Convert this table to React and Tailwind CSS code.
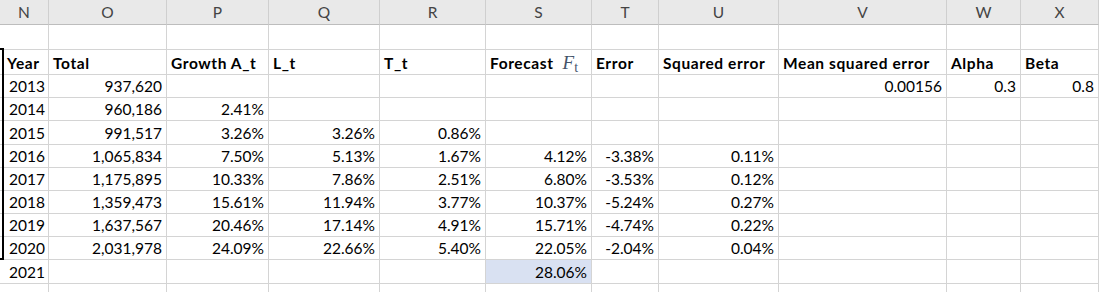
import React from "react";

const cols = [
  { id: "N", w: "w-[49px]" },
  { id: "O", w: "w-[118px]" },
  { id: "P", w: "w-[102px]" },
  { id: "Q", w: "w-[111px]" },
  { id: "R", w: "w-[106px]" },
  { id: "S", w: "w-[106px]" },
  { id: "T", w: "w-[67px]" },
  { id: "U", w: "w-[120px]" },
  { id: "V", w: "w-[168px]" },
  { id: "W", w: "w-[74px]" },
  { id: "X", w: "w-[78px]" },
];

const headers = [
  "Year",
  "Total",
  "Growth A_t",
  "L_t",
  "T_t",
  "forecast",
  "Error",
  "Squared error",
  "Mean squared error",
  "Alpha",
  "Beta",
];

// year, total, growth, L, T, forecast, error, sq error, mse, alpha, beta
const rows = [
  { h: "h-[23px]", v: ["2013", "937,620", "", "", "", "", "", "", "0.00156", "0.3", "0.8"] },
  { h: "h-[23px]", v: ["2014", "960,186", "2.41%", "", "", "", "", "", "", "", ""] },
  { h: "h-[24px]", v: ["2015", "991,517", "3.26%", "3.26%", "0.86%", "", "", "", "", "", ""] },
  { h: "h-[23px]", v: ["2016", "1,065,834", "7.50%", "5.13%", "1.67%", "4.12%", "-3.38%", "0.11%", "", "", ""] },
  { h: "h-[23px]", v: ["2017", "1,175,895", "10.33%", "7.86%", "2.51%", "6.80%", "-3.53%", "0.12%", "", "", ""] },
  { h: "h-[23px]", v: ["2018", "1,359,473", "15.61%", "11.94%", "3.77%", "10.37%", "-5.24%", "0.27%", "", "", ""] },
  { h: "h-[23px]", v: ["2019", "1,637,567", "20.46%", "17.14%", "4.91%", "15.71%", "-4.74%", "0.22%", "", "", ""] },
  { h: "h-[23px]", v: ["2020", "2,031,978", "24.09%", "22.66%", "5.40%", "22.05%", "-2.04%", "0.04%", "", "", ""] },
  { h: "h-[24px]", v: ["2021", "", "", "", "", "28.06%", "", "", "", "", ""] },
  { h: "h-[12px]", v: ["", "", "", "", "", "", "", "", "", "", ""] },
];

function Cell({ w, h, className = "", children }) {
  return (
    <div
      className={`${w} ${h} shrink-0 flex items-end px-[4px] pb-[2px] border-r border-b border-[#d4d4d4] leading-[18px] ${className}`}
    >
      {children}
    </div>
  );
}

function App() {
  return (
    <div
      className="relative w-[1099px] h-[292px] overflow-hidden bg-white text-black text-[15.5px]"
      style={{ fontFamily: "Lato, 'Noto Sans', sans-serif" }}
    >
      {/* column letters */}
      <div className="flex">
        {cols.map((c) => (
          <div
            key={c.id}
            className={`${c.w} h-[25px] shrink-0 flex items-center justify-center bg-[#e9e9e9] border-r border-r-[#cfcfcf] border-b border-b-[#bdbdbd] text-[#444] pt-[1px]`}
          >
            {c.id}
          </div>
        ))}
      </div>

      {/* empty row */}
      <div className="flex">
        {cols.map((c) => (
          <Cell key={c.id} w={c.w} h="h-[25px]" />
        ))}
      </div>

      {/* header row */}
      <div className="flex font-bold tracking-[0.6px]">
        {cols.map((c, i) => (
          <Cell key={c.id} w={c.w} h="h-[25px]" className={i === 0 ? "pl-[7px]" : ""}>
            {headers[i] === "forecast" ? (
              <span className="whitespace-nowrap flex items-end">
                <span>Forecast</span>
                <span
                  className="font-normal italic text-[#44546a] ml-[9px] text-[19px] leading-[18px] tracking-normal"
                  style={{ fontFamily: "'Liberation Serif', serif" }}
                >
                  F
                </span>
                <span
                  className="font-normal text-[#44546a] text-[14px] leading-[14px] -mb-[3px] tracking-normal"
                  style={{ fontFamily: "'Liberation Serif', serif" }}
                >
                  t
                </span>
              </span>
            ) : (
              <span className="whitespace-nowrap">{headers[i]}</span>
            )}
          </Cell>
        ))}
      </div>

      {/* data rows */}
      {rows.map((r, ri) => (
        <div key={ri} className="flex">
          {cols.map((c, i) => (
            <Cell
              key={c.id}
              w={c.w}
              h={r.h}
              className={`${i === 0 ? "justify-start pl-[9px]" : "justify-end"} ${
                ri === 8 && c.id === "S" ? "bg-[#d9e1f2]" : ""
              }`}
            >
              {r.v[i]}
            </Cell>
          ))}
        </div>
      ))}

      {/* thick border edge of the range in column M */}
      <div className="absolute left-0 top-[48px] w-[4px] h-[212px] border-t-2 border-r-2 border-b-2 border-black" />
    </div>
  );
}

export default App;
